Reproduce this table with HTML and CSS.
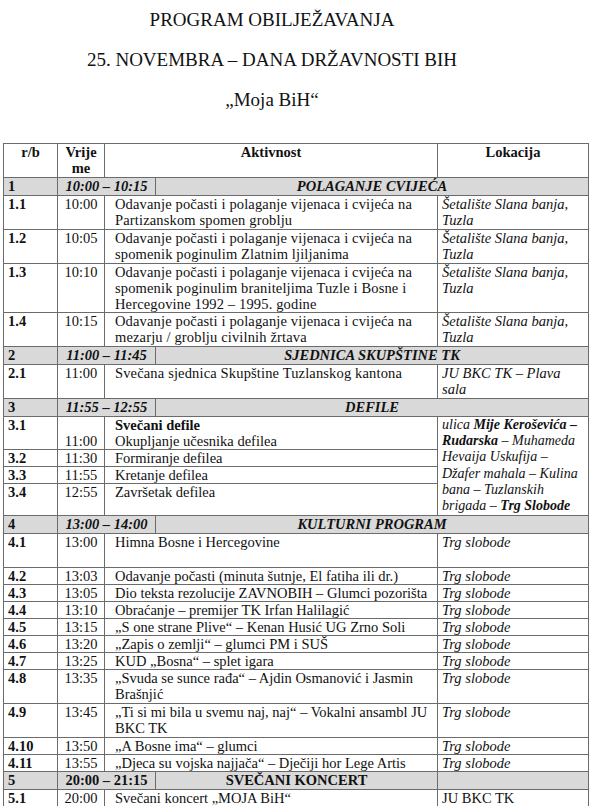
FILE: index.html
```html
<!DOCTYPE html>
<html lang="bs">
<head>
    <meta charset="UTF-8">
    <meta name="viewport" content="width=device-width, initial-scale=1.0">
    <title>Program obilježavanja</title>
    <link rel="stylesheet" href="styles.css">
</head>
<body>
    <div class="page">
        <div class="title">
            <h1>PROGRAM OBILJEŽAVANJA</h1>
            <h1>25. NOVEMBRA – DANA DRŽAVNOSTI BIH</h1>
            <h1>„Moja BiH“</h1>
        </div>

        <table class="program">
            <colgroup>
                <col class="c-rb">
                <col class="c-time">
                <col class="c-gap">
                <col class="c-act">
                <col class="c-loc">
            </colgroup>
            <thead>
                <tr>
                    <th>r/b</th>
                    <th>Vrije me</th>
                    <th colspan="2">Aktivnost</th>
                    <th>Lokacija</th>
                </tr>
            </thead>
            <tbody>
                <tr class="group">
                    <td class="rb">1</td>
                    <td colspan="2" class="gtime">10:00 – 10:15</td>
                    <td colspan="2" class="gtitle">POLAGANJE CVIJEĆA</td>
                </tr>
                <tr class="two">
                    <td class="rb">1.1</td>
                    <td class="time">10:00</td>
                    <td colspan="2" class="act cam">Odavanje počasti i polaganje vijenaca i cvijeća na Partizanskom spomen groblju</td>
                    <td class="loc">Šetalište Slana banja, Tuzla</td>
                </tr>
                <tr class="two">
                    <td class="rb">1.2</td>
                    <td class="time">10:05</td>
                    <td colspan="2" class="act cam">Odavanje počasti i polaganje vijenaca i cvijeća na spomenik poginulim Zlatnim ljiljanima</td>
                    <td class="loc">Šetalište Slana banja, Tuzla</td>
                </tr>
                <tr>
                    <td class="rb">1.3</td>
                    <td class="time">10:10</td>
                    <td colspan="2" class="act cam">Odavanje počasti i polaganje vijenaca i cvijeća na spomenik poginulim braniteljima Tuzle i Bosne i Hercegovine 1992 – 1995. godine</td>
                    <td class="loc">Šetalište Slana banja, Tuzla</td>
                </tr>
                <tr class="two">
                    <td class="rb">1.4</td>
                    <td class="time">10:15</td>
                    <td colspan="2" class="act cam">Odavanje počasti i polaganje vijenaca i cvijeća na mezarju / groblju civilnih žrtava</td>
                    <td class="loc">Šetalište Slana banja, Tuzla</td>
                </tr>

                <tr class="group">
                    <td class="rb">2</td>
                    <td colspan="2" class="gtime">11:00 – 11:45</td>
                    <td colspan="2" class="gtitle">SJEDNICA SKUPŠTINE TK</td>
                </tr>
                <tr class="two">
                    <td class="rb">2.1</td>
                    <td class="time">11:00</td>
                    <td colspan="2" class="act cam">Svečana sjednica Skupštine Tuzlanskog kantona</td>
                    <td class="loc">JU BKC TK – Plava<br>sala</td>
                </tr>

                <tr class="group">
                    <td class="rb">3</td>
                    <td colspan="2" class="gtime">11:55 – 12:55</td>
                    <td colspan="2" class="gtitle">DEFILE</td>
                </tr>
                <tr class="defile-edge">
                    <td class="rb">3.1</td>
                    <td class="time"><br>11:00</td>
                    <td colspan="2" class="act"><b>Svečani defile</b><br>Okupljanje učesnika defilea</td>
                    <td rowspan="4" class="loc route">ulica <b>Mije Keroševića –</b><br><b>Rudarska</b> – Muhameda<br>Hevaija Uskufija –<br>Džafer mahala – Kulina<br>bana – Tuzlanskih<br>brigada – <b>Trg Slobode</b></td>
                </tr>
                <tr>
                    <td class="rb">3.2</td>
                    <td class="time">11:30</td>
                    <td colspan="2" class="act">Formiranje defilea</td>
                </tr>
                <tr>
                    <td class="rb">3.3</td>
                    <td class="time">11:55</td>
                    <td colspan="2" class="act">Kretanje defilea</td>
                </tr>
                <tr class="defile-edge">
                    <td class="rb">3.4</td>
                    <td class="time">12:55</td>
                    <td colspan="2" class="act">Završetak defilea</td>
                </tr>

                <tr class="group">
                    <td class="rb">4</td>
                    <td colspan="2" class="gtime">13:00 – 14:00</td>
                    <td colspan="2" class="gtitle">KULTURNI PROGRAM</td>
                </tr>
                <tr class="two">
                    <td class="rb">4.1</td>
                    <td class="time">13:00</td>
                    <td colspan="2" class="act">Himna Bosne i Hercegovine</td>
                    <td class="loc">Trg slobode</td>
                </tr>
                <tr>
                    <td class="rb">4.2</td>
                    <td class="time">13:03</td>
                    <td colspan="2" class="act">Odavanje počasti (minuta šutnje, El fatiha ili dr.)</td>
                    <td class="loc">Trg slobode</td>
                </tr>
                <tr>
                    <td class="rb">4.3</td>
                    <td class="time">13:05</td>
                    <td colspan="2" class="act">Dio teksta rezolucije ZAVNOBIH – Glumci pozorišta</td>
                    <td class="loc">Trg slobode</td>
                </tr>
                <tr>
                    <td class="rb">4.4</td>
                    <td class="time">13:10</td>
                    <td colspan="2" class="act">Obraćanje – premijer TK Irfan Halilagić</td>
                    <td class="loc">Trg slobode</td>
                </tr>
                <tr>
                    <td class="rb">4.5</td>
                    <td class="time">13:15</td>
                    <td colspan="2" class="act">„S one strane Plive“ – Kenan Husić UG Zrno Soli</td>
                    <td class="loc">Trg slobode</td>
                </tr>
                <tr>
                    <td class="rb">4.6</td>
                    <td class="time">13:20</td>
                    <td colspan="2" class="act">„Zapis o zemlji“ – glumci PM i SUŠ</td>
                    <td class="loc">Trg slobode</td>
                </tr>
                <tr>
                    <td class="rb">4.7</td>
                    <td class="time">13:25</td>
                    <td colspan="2" class="act">KUD „Bosna“ – splet igara</td>
                    <td class="loc">Trg slobode</td>
                </tr>
                <tr class="two">
                    <td class="rb">4.8</td>
                    <td class="time">13:35</td>
                    <td colspan="2" class="act">„Svuda se sunce rađa“ – Ajdin Osmanović i Jasmin Brašnjić</td>
                    <td class="loc">Trg slobode</td>
                </tr>
                <tr class="two">
                    <td class="rb">4.9</td>
                    <td class="time">13:45</td>
                    <td colspan="2" class="act">„Ti si mi bila u svemu naj, naj“ – Vokalni ansambl JU BKC TK</td>
                    <td class="loc">Trg slobode</td>
                </tr>
                <tr>
                    <td class="rb">4.10</td>
                    <td class="time">13:50</td>
                    <td colspan="2" class="act">„A Bosne ima“ – glumci</td>
                    <td class="loc">Trg slobode</td>
                </tr>
                <tr>
                    <td class="rb">4.11</td>
                    <td class="time">13:55</td>
                    <td colspan="2" class="act">„Djeca su vojska najjača“ – Dječiji hor Lege Artis</td>
                    <td class="loc">Trg slobode</td>
                </tr>

                <tr class="group">
                    <td class="rb">5</td>
                    <td colspan="2" class="gtime plain">20:00 – 21:15</td>
                    <td class="gtitle plain">SVEČANI KONCERT</td>
                    <td></td>
                </tr>
                <tr>
                    <td class="rb">5.1</td>
                    <td class="time">20:00</td>
                    <td colspan="2" class="act">Svečani koncert „MOJA BiH“</td>
                    <td class="loc upright">JU BKC TK</td>
                </tr>
            </tbody>
        </table>
    </div>
</body>
</html>
```

FILE: styles.css
```css
body {
    margin: 0;
    background-color: #fff;
    color: #111;
    font-family: "Liberation Serif", "Times New Roman", serif;
}

.page {
    padding: 0 4px 0 3px;
}

.title {
    text-align: center;
    padding-right: 48px;
    margin-bottom: 23px;
}

.title h1 {
    margin: 0;
    font-size: 19px;
    font-weight: normal;
    line-height: 40px;
}

.program {
    width: 586px;
    border-collapse: collapse;
    table-layout: fixed;
    font-size: 14.5px;
    line-height: 16px;
}

.c-rb { width: 54px; }
.c-time { width: 47px; }
.c-gap { width: 51px; }
.c-act { width: 282px; }
.c-loc { width: 151px; }

.program th,
.program td {
    border: 1px solid #6b6b6b;
    padding: 0 4px;
    vertical-align: top;
    text-align: left;
}

.program th {
    text-align: center;
    font-weight: bold;
    height: 33px;
}

/* rows typed in the slightly wider font of the original document */
.program .cam {
    letter-spacing: 0.15px;
}

.rb {
    font-weight: bold;
    padding-left: 2px;
}

.program td.time {
    text-align: center;
    padding: 0;
}

.program td.act {
    padding-left: 10px;
}

.loc {
    font-style: italic;
}

.loc.upright {
    font-style: normal;
}

.program td.route {
    white-space: nowrap;
    font-size: 14px;
    line-height: 16.2px;
    padding-right: 0;
}

.group td {
    background-color: #d9d9d9;
    font-weight: bold;
    height: 17px;
    line-height: 17px;
}

.program td.gtime,
.program td.gtitle {
    font-style: italic;
    text-align: center;
}

.program td.plain {
    font-style: normal;
}

.two td {
    height: 33px;
}

.defile-edge td {
    height: 31px;
}
```
